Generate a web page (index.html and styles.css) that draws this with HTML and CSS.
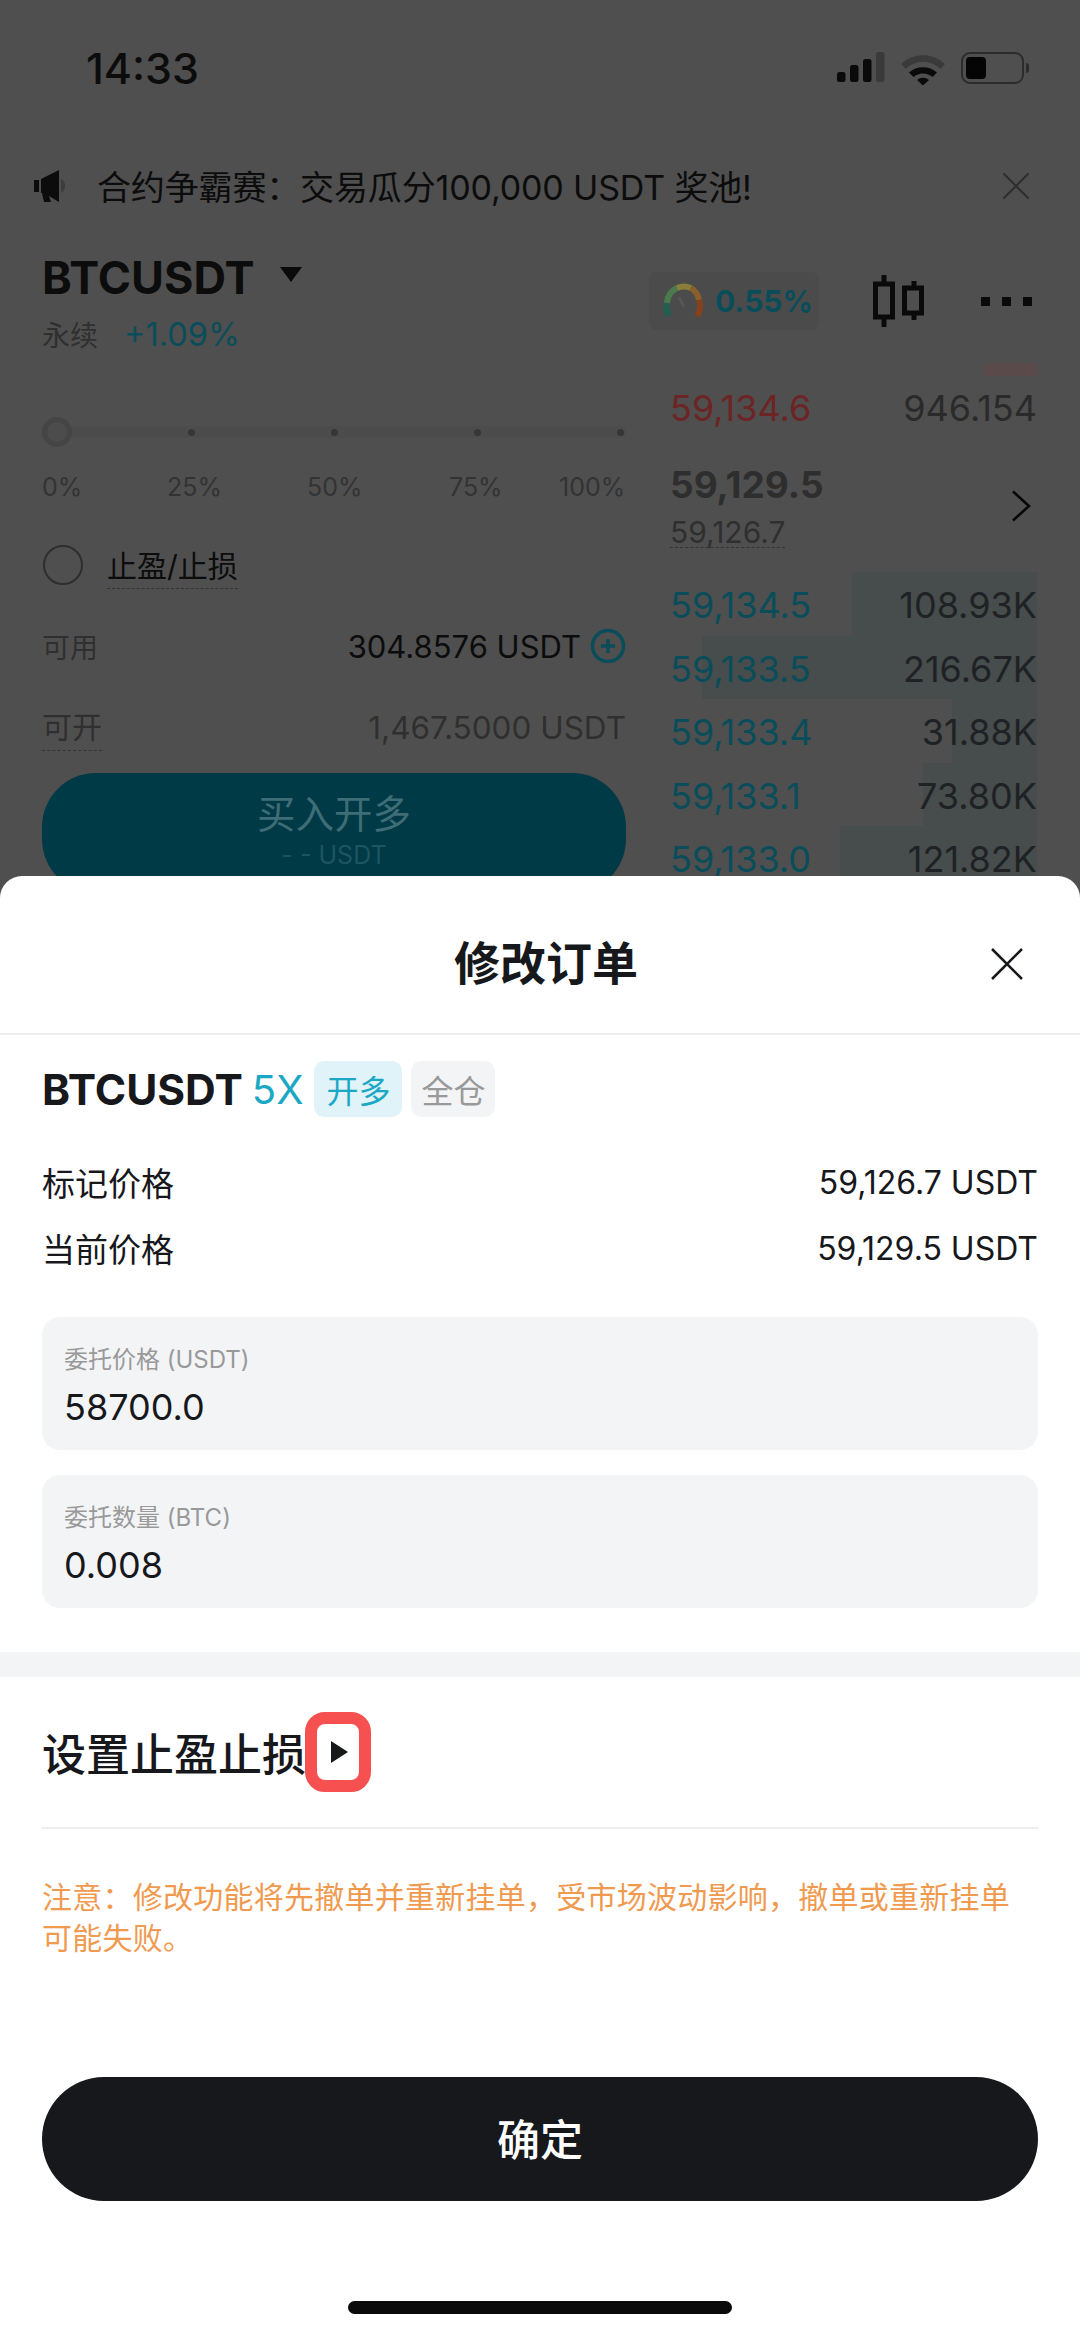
FILE: index.html
```html
<!DOCTYPE html>
<html lang="zh-CN">

<head>
    <meta charset="UTF-8">
    <meta name="viewport" content="width=device-width, initial-scale=1.0">
    <title>修改订单</title>
    <link rel="stylesheet" href="styles.css">
</head>

<body>
    <div class="page">

        <!-- dimmed trade screen behind the sheet -->
        <div class="behind">
            <div class="status-bar">
                <span class="time">14:33</span>
                <div class="status-icons">
                    <svg width="48" height="32" viewBox="0 0 48 32">
                        <rect x="0" y="20" width="8.500" height="10" rx="2.500" fill="#0a0a0a" />
                        <rect x="13" y="13" width="8.500" height="17" rx="2.500" fill="#0a0a0a" />
                        <rect x="26" y="7" width="8.500" height="23" rx="2.500" fill="#0a0a0a" />
                        <rect x="39" y="0" width="8.500" height="30" rx="2.500" fill="#3a3a3a" />
                    </svg>
                    <svg width="46" height="33" viewBox="0 0 46 33">
                        <path d="M1 12 A32 32 0 0 1 45 12 L40.500 17 A25 25 0 0 0 5.500 17 Z" fill="#3a3a3a" />
                        <path d="M9 20.500 A21 21 0 0 1 37 20.500 L32.500 25 A14.500 14.500 0 0 0 13.500 25 Z" fill="#0a0a0a" />
                        <path d="M17 28 A9 9 0 0 1 29 28 L23 33.500 Z" fill="#0a0a0a" />
                    </svg>
                    <div class="battery">
                        <div class="battery-body"><div class="battery-fill"></div></div>
                        <div class="battery-nub"></div>
                    </div>
                </div>
            </div>

            <div class="banner">
                <svg class="speaker" width="37" height="32" viewBox="0 0 37 32">
                    <path d="M27 9 A8 8 0 0 1 27 23 Z" fill="#3c3c3c" />
                    <path d="M0 10 H5 V22 H0 Z M7 9 L25 0 V32 L15 26 L17 32 H10 L8 23 H7 Z" fill="#0c0c0c" />
                </svg>
                <span class="banner-text">合约争霸赛<span class="mid-colon">：</span>交易瓜分100,000 USDT 奖池!</span>
                <svg class="banner-close" width="28" height="28" viewBox="0 0 28 28">
                    <path d="M1.500 1.500 L26.500 26.500 M26.500 1.500 L1.500 26.500" stroke="#2e2e2e" stroke-width="2" />
                </svg>
            </div>

            <div class="ticker">
                <div class="ticker-left">
                    <div class="symbol-row">
                        <span class="symbol">BTCUSDT</span>
                        <span class="caret"></span>
                    </div>
                    <div class="sub-row">
                        <span class="muted perp">永续</span>
                        <span class="teal">+1.09%</span>
                    </div>
                </div>
                <div class="ticker-right">
                    <div class="rate-badge">
                        <svg width="42" height="36" viewBox="0 0 42 36">
                            <path d="M7 33 A18 18 0 0 1 5 20" fill="none" stroke="#1f5f52" stroke-width="6" />
                            <path d="M5 20 A18 18 0 0 1 15 5" fill="none" stroke="#4c7a4c" stroke-width="6" />
                            <path d="M15 5 A18 18 0 0 1 29 5" fill="none" stroke="#8a7f3a" stroke-width="6" />
                            <path d="M29 5 A18 18 0 0 1 37 17" fill="none" stroke="#8a5f2c" stroke-width="6" />
                            <path d="M37 17 A18 18 0 0 1 35 33" fill="none" stroke="#86401c" stroke-width="6" />
                            <path d="M17 14 L22 24" stroke="#565656" stroke-width="3" />
                        </svg>
                        <span class="rate-value">0.55%</span>
                    </div>
                    <svg width="52" height="52" viewBox="0 0 52 52">
                        <path d="M12 0 V52 M42 6 V45" stroke="#0a0a0a" stroke-width="5" />
                        <rect x="3.500" y="9" width="17" height="33" fill="#4f4f4f" stroke="#0a0a0a" stroke-width="5" />
                        <rect x="32.500" y="13" width="17" height="25" fill="#4f4f4f" stroke="#0a0a0a" stroke-width="5" />
                    </svg>
                    <div class="dots"><i></i><i></i><i></i></div>
                </div>
            </div>

            <div class="trade">
                <div class="trade-form">
                    <div class="slider">
                        <span class="slider-handle"></span>
                        <span class="slider-dot"></span>
                        <span class="slider-dot"></span>
                        <span class="slider-dot"></span>
                        <span class="slider-dot"></span>
                    </div>
                    <div class="slider-labels">
                        <span>0%</span><span>25%</span><span>50%</span><span>75%</span><span>100%</span>
                    </div>
                    <div class="tp-row">
                        <span class="radio"></span>
                        <span class="tp-label">止盈/止损</span>
                    </div>
                    <div class="form-row">
                        <span class="muted form-label">可用</span>
                        <span class="balance">304.8576 USDT
                            <svg width="36" height="36" viewBox="0 0 36 36">
                                <circle cx="18" cy="18" r="15.500" fill="none" stroke="#094d5a" stroke-width="3.500" />
                                <path d="M11 18 H25 M18 11 V25" stroke="#094d5a" stroke-width="3.500" />
                            </svg>
                        </span>
                    </div>
                    <div class="form-row form-row-open">
                        <span class="muted form-label dashed">可开</span>
                        <span class="muted open-value">1,467.5000 USDT</span>
                    </div>
                    <div class="buy-button">
                        <div class="buy-title">买入开多</div>
                        <div class="buy-sub">- - USDT</div>
                    </div>
                </div>

                <div class="book">
                    <div class="ask-bar"></div>
                    <div class="book-row ask-row">
                        <span class="red">59,134.6</span>
                        <span>946.154</span>
                    </div>
                    <div class="book-mid">
                        <div>
                            <div class="last-price">59,129.5</div>
                            <div class="mark-price">59,126.7</div>
                        </div>
                        <svg class="book-arrow" width="20" height="32" viewBox="0 0 20 32">
                            <path d="M2 1.500 L18 16 L2 30.500" fill="none" stroke="#060606" stroke-width="2.500" />
                        </svg>
                    </div>
                    <div class="book-row"><div class="depth" style="width:185px"></div><span class="teal">59,134.5</span><span>108.93K</span></div>
                    <div class="book-row"><div class="depth" style="width:335px"></div><span class="teal">59,133.5</span><span>216.67K</span></div>
                    <div class="book-row"><div class="depth" style="width:85px"></div><span class="teal">59,133.4</span><span>31.88K</span></div>
                    <div class="book-row"><div class="depth" style="width:114px"></div><span class="teal">59,133.1</span><span>73.80K</span></div>
                    <div class="book-row"><div class="depth" style="width:197px"></div><span class="teal">59,133.0</span><span>121.82K</span></div>
                </div>
            </div>
        </div>

        <!-- bottom sheet -->
        <div class="sheet">
            <div class="sheet-head">
                <span class="sheet-title">修改订单</span>
                <svg class="sheet-close" width="32" height="32" viewBox="0 0 32 32">
                    <path d="M1 1 L31 31 M31 1 L1 31" stroke="#17181c" stroke-width="2.500" />
                </svg>
            </div>

            <div class="order-info">
                <div class="order-title">
                    <span class="order-symbol">BTCUSDT</span>
                    <span class="order-lever">5X</span>
                    <span class="tag tag-long">开多</span>
                    <span class="tag tag-cross">全仓</span>
                </div>
                <div class="price-row">
                    <span>标记价格</span>
                    <span class="price-value">59,126.7 USDT</span>
                </div>
                <div class="price-row">
                    <span>当前价格</span>
                    <span class="price-value">59,129.5 USDT</span>
                </div>
                <div class="field">
                    <div class="field-label">委托价格 (USDT)</div>
                    <div class="field-value">58700.0</div>
                </div>
                <div class="field">
                    <div class="field-label">委托数量 (BTC)</div>
                    <div class="field-value">0.008</div>
                </div>
            </div>

            <div class="band"></div>

            <div class="tp-section">
                <div class="tp-head">
                    <span class="tp-title">设置止盈止损</span>
                    <span class="tp-toggle"><span class="tp-play"></span></span>
                </div>
                <p class="notice">注意<span class="mid-colon">：</span>修改功能将先撤单并重新挂单，受市场波动影响，撤单或重新挂单<br>可能失败。</p>
            </div>

            <div class="confirm">确定</div>
            <div class="home-bar"></div>
        </div>
    </div>
</body>

</html>
```

FILE: styles.css
```css
* {
    box-sizing: border-box;
}

body {
    margin: 0;
    font-family: Inter, "Noto Sans CJK SC", sans-serif;
    color: #17181c;
    background-color: #4f4f4f;
}

.page {
    width: 1080px;
    height: 2337px;
    overflow: hidden;
}

/* the colon sits mid-height in the reference */
.mid-colon {
    font-family: "Noto Sans CJK TC", sans-serif;
}

/* dimmed screen */
.behind {
    height: 900px;
    overflow: hidden;
    background-color: #4f4f4f;
    color: #0c0c0c;
}

.muted {
    color: #2f2f2f;
}

.teal {
    color: #094d5a;
}

.red {
    color: #6c2424;
}

.status-bar {
    height: 136px;
    padding: 0 51px 0 86px;
    display: flex;
    justify-content: space-between;
    align-items: center;
}

.time {
    font-size: 43px;
    font-weight: 500;
}

.status-icons {
    display: flex;
    align-items: center;
    gap: 15px;
}

.battery {
    display: flex;
    align-items: center;
    gap: 2px;
}

.battery-body {
    width: 63px;
    height: 32px;
    padding: 3px;
    border: 2.5px solid #2c2c2c;
    border-radius: 9px;
}

.battery-fill {
    width: 20px;
    height: 100%;
    background-color: #050505;
    border-radius: 4px;
}

.battery-nub {
    width: 3px;
    height: 10px;
    background-color: #2c2c2c;
    border-radius: 0 3px 3px 0;
}

.banner {
    height: 99px;
    padding: 0 50px 0 34px;
    display: flex;
    align-items: center;
}

.banner-text {
    margin-left: 26px;
    flex: 1;
    font-size: 34px;
    letter-spacing: -0.15px;
}

.ticker {
    height: 125px;
    padding: 0 48px 0 42px;
    display: flex;
    justify-content: space-between;
}

.symbol-row {
    margin-top: 20px;
    display: flex;
    align-items: center;
    height: 44px;
}

.symbol {
    font-size: 45px;
    font-weight: 700;
}

.caret {
    margin-left: 25px;
    margin-bottom: 5px;
    border-left: 11px solid transparent;
    border-right: 11px solid transparent;
    border-top: 15px solid #0a0a0a;
}

.sub-row {
    margin-top: 15px;
    display: flex;
    align-items: center;
    gap: 26px;
    font-size: 32.500px;
}

.perp {
    font-size: 28px;
}

.ticker-right {
    margin-top: 37px;
    height: 58px;
    display: flex;
    align-items: center;
}

.rate-badge {
    width: 170px;
    height: 58px;
    padding-left: 13px;
    display: flex;
    align-items: center;
    gap: 11px;
    background-color: #4b4b4b;
    border-radius: 8px;
    margin-right: 53px;
}

.rate-value {
    font-size: 30px;
    font-weight: 700;
    color: #094d5a;
}

.dots {
    margin-left: 57px;
    display: flex;
    gap: 12px;
}

.dots i {
    width: 9px;
    height: 9px;
    background-color: #0a0a0a;
}

.trade {
    display: flex;
    justify-content: space-between;
    padding: 0 43px 0 42px;
}

.trade-form {
    width: 584px;
}

.slider {
    margin-top: 57px;
    height: 30px;
    display: flex;
    align-items: center;
    gap: 136px;
    background: linear-gradient(#4c4c4c, #4c4c4c) center / 100% 12px no-repeat;
}

.slider-handle {
    width: 30px;
    height: 30px;
    margin-right: -20px;
    border: 5px solid #454545;
    border-radius: 50%;
    background-color: #4c4c4c;
}

.slider-dot {
    width: 7px;
    height: 7px;
    border-radius: 50%;
    background-color: #363636;
}

.slider-labels {
    margin-top: 25px;
    display: grid;
    grid-template-columns: 125px 140px 142px 110px 67px;
    font-size: 25px;
    line-height: 30px;
    color: #333333;
}

.tp-row {
    margin-top: 44px;
    height: 38px;
    display: flex;
    align-items: center;
}

.radio {
    width: 40px;
    height: 40px;
    margin-left: 1px;
    border: 2.5px solid #2e2e2e;
    border-radius: 50%;
}

.tp-label {
    margin-left: 24px;
    margin-top: 6px;
    font-size: 30px;
    line-height: 38px;
    border-bottom: 1.5px dashed #333333;
    padding-bottom: 3px;
}

.form-row {
    margin-top: 44px;
    height: 36px;
    display: flex;
    justify-content: space-between;
    align-items: center;
}

.form-row-open {
    margin-top: 45px;
}

.form-label {
    font-size: 28px;
}

.dashed {
    font-size: 30px;
    padding-bottom: 3px;
    border-bottom: 1.5px dashed #333333;
}

.balance {
    display: flex;
    align-items: center;
    gap: 9px;
    font-size: 31px;
}

.open-value {
    font-size: 31.5px;
}

.buy-button {
    margin-top: 28px;
    height: 120px;
    padding-top: 21px;
    text-align: center;
    background-color: #003a46;
    border-radius: 54px;
    color: #3f6d76;
}

.buy-title {
    font-size: 38.5px;
    line-height: 40px;
}

.buy-sub {
    margin-top: 6px;
    font-size: 25px;
    line-height: 30px;
    color: #1d5561;
}

.book {
    width: 367px;
    font-size: 36px;
}

.ask-bar {
    width: 52px;
    height: 13px;
    margin-top: 3px;
    margin-left: auto;
    background-color: #5a4a4a;
}

.book-row {
    position: relative;
    height: 63.5px;
    padding-top: 3px;
    display: flex;
    justify-content: space-between;
    align-items: center;
    color: #1e2224;
}

.ask-row {
    padding-top: 0;
    color: #2a2a2a;
}

.book-row span {
    position: relative;
}

.depth {
    position: absolute;
    top: 0;
    right: 0;
    bottom: 0;
    background-color: #474c4d;
}

.book-mid {
    height: 132.5px;
    padding-top: 25px;
    display: flex;
    justify-content: space-between;
}

.last-price {
    font-size: 37px;
    font-weight: 700;
    line-height: 40px;
    color: #2e2e2e;
}

.mark-price {
    display: inline-block;
    margin-top: 12px;
    font-size: 30px;
    line-height: 30px;
    color: #2f2f2f;
    border-bottom: 1.5px dashed #333333;
}

.book-arrow {
    margin-top: 25px;
    margin-right: 6px;
}

/* sheet */
.sheet {
    position: relative;
    height: 1461px;
    margin-top: -24px;
    background-color: #ffffff;
    border-radius: 22px 22px 0 0;
}

.sheet-head {
    height: 159px;
    padding: 10px 0 0 12px;
    display: flex;
    justify-content: center;
    align-items: center;
    border-bottom: 2px solid #ececec;
}

.sheet-title {
    font-size: 46px;
    font-weight: 700;
}

.sheet-close {
    position: absolute;
    top: 72px;
    right: 57px;
}

.order-info {
    height: 617px;
    padding: 26px 42px 0;
}

.order-title {
    height: 56px;
    display: flex;
    align-items: center;
}

.order-symbol {
    font-size: 42.5px;
    font-weight: 700;
}

.order-lever {
    margin-left: 9px;
    font-size: 40px;
    color: #1ba8c4;
}

.tag {
    height: 56px;
    padding: 0 12px;
    display: flex;
    align-items: center;
    font-size: 32px;
    border-radius: 10px;
}

.tag-long {
    margin-left: 11px;
    color: #1ba8c4;
    background-color: #dff3f8;
}

.tag-cross {
    margin-left: 9px;
    padding: 0 10px;
    color: #999999;
    background-color: #f3f4f6;
}

.price-row {
    margin-top: 49px;
    display: flex;
    justify-content: space-between;
    align-items: center;
    height: 32px;
    font-size: 33px;
}

.price-row + .price-row {
    margin-top: 34px;
}

.price-value {
    font-size: 32px;
}

.field {
    height: 133px;
    margin-top: 25px;
    padding: 28px 22px 0;
    background-color: #f3f4f6;
    border-radius: 18px;
}

.price-row + .field {
    margin-top: 53px;
}

.field-label {
    font-size: 24px;
    line-height: 30px;
    color: #999999;
}

.field-value {
    margin-top: 12px;
    font-size: 36px;
    line-height: 40px;
}

.band {
    height: 25px;
    background-color: #f3f4f6;
}

.tp-section {
    height: 400px;
    padding: 0 42px;
}

.tp-head {
    height: 152px;
    display: flex;
    align-items: center;
    border-bottom: 2px solid #eeeeee;
}

.tp-title {
    font-size: 44px;
    font-weight: 500;
}

.tp-toggle {
    width: 66px;
    height: 80px;
    margin-left: -1px;
    display: flex;
    justify-content: center;
    align-items: center;
    border: 12.5px solid #f65050;
    border-radius: 20px;
}

.tp-play {
    margin-left: 3px;
    border-top: 11px solid transparent;
    border-bottom: 11px solid transparent;
    border-left: 17px solid #17181c;
}

.notice {
    margin: 46px 0 0;
    font-size: 30px;
    line-height: 41px;
    letter-spacing: 0.25px;
    color: #f09a50;
}

.confirm {
    height: 124px;
    margin: 0 42px;
    padding-bottom: 4px;
    display: flex;
    justify-content: center;
    align-items: center;
    font-size: 43px;
    font-weight: 500;
    color: #ffffff;
    background-color: #17181c;
    border-radius: 62px;
}

.home-bar {
    width: 384px;
    height: 13px;
    margin: 100px auto 0;
    background-color: #0a0a0a;
    border-radius: 7px;
}
```
